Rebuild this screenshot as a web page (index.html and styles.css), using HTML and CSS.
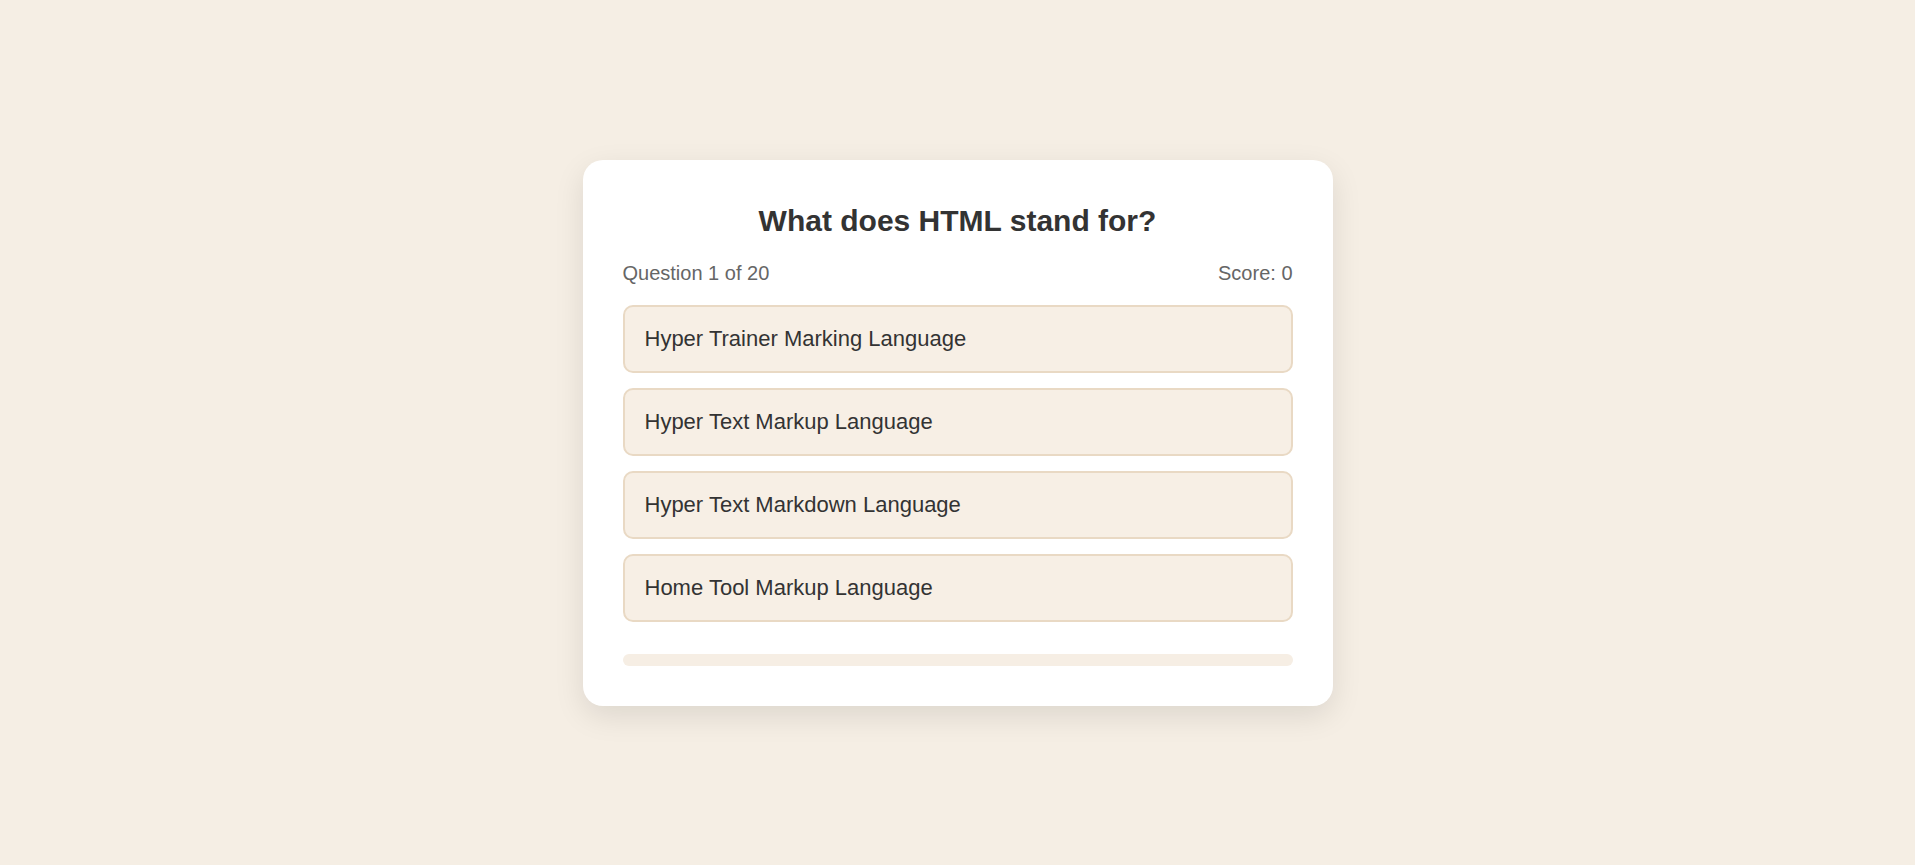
FILE: index.html
```html
<!DOCTYPE html>
<html lang="en">
<head>
<meta charset="utf-8">
<title>Quiz</title>
<link rel="stylesheet" href="styles.css">
</head>
<body>
<main class="quiz-card">
  <h2 class="question-title">What does HTML stand for?</h2>
  <div class="quiz-info">
    <span class="question-count">Question 1 of 20</span>
    <span class="score">Score: 0</span>
  </div>
  <div class="options">
    <button class="option">Hyper Trainer Marking Language</button>
    <button class="option">Hyper Text Markup Language</button>
    <button class="option">Hyper Text Markdown Language</button>
    <button class="option">Home Tool Markup Language</button>
  </div>
  <div class="progress">
    <div class="progress-fill" style="width: 0%"></div>
  </div>
</main>
</body>
</html>
```

FILE: styles.css
```css
* {
  box-sizing: border-box;
}

html, body {
  height: 100%;
}

body {
  margin: 0;
  background: #f5eee4;
  font-family: "Liberation Sans", Arial, sans-serif;
  font-size: 20px;
  line-height: 1.5;
  color: #333333;
  display: flex;
  align-items: center;
  justify-content: center;
}

.quiz-card {
  width: 750px;
  background: #ffffff;
  border-radius: 20px;
  padding: 40px;
  box-shadow: 0 10px 30px rgba(0, 0, 0, 0.1);
}

.question-title {
  margin: 0 0 16px;
  font-size: 30px;
  font-weight: 700;
  line-height: 42px;
  text-align: center;
  color: #333333;
}

.quiz-info {
  display: flex;
  justify-content: space-between;
  font-size: 20px;
  line-height: 30px;
  color: #666666;
  margin-bottom: 17px;
}

.options {
  display: flex;
  flex-direction: column;
  gap: 15px;
  margin-bottom: 32px;
}

.option {
  display: block;
  width: 100%;
  text-align: left;
  font-family: inherit;
  font-size: 22px;
  line-height: 32px;
  padding: 16px 20px;
  border: 2px solid #e9d9c4;
  border-radius: 10px;
  background: #f7efe5;
  color: #333333;
  cursor: pointer;
}

.progress {
  height: 12px;
  border-radius: 6px;
  background: #f6eee4;
  overflow: hidden;
}

.progress-fill {
  height: 100%;
  background: #d9b98f;
}
```
